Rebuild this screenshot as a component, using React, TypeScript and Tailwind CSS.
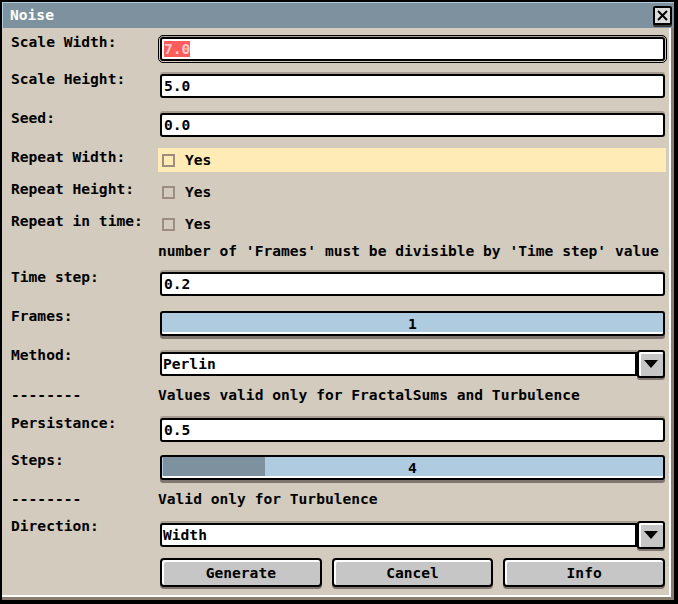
import React from "react";

const font = "font-['DejaVu_Sans_Mono',monospace] text-[14.6px] font-bold";

function Label({ children, check }: { children: React.ReactNode; check?: boolean }) {
  return (
    <div className={"w-[149px] shrink-0 leading-[16px] text-black " + (check ? "mt-[1px]" : "mt-[-3px]")}>
      {children}
    </div>
  );
}

function Entry({ children, focused }: { children?: React.ReactNode; focused?: boolean }) {
  return (
    <div
      className={
        "h-[24px] flex-1 rounded-[3px] border-2 border-black bg-white shadow-[0_-2px_0_#a99e92] flex items-center pl-[2px] leading-[16px] " +
        (focused ? "outline-1 outline-black outline-offset-[1px]" : "")
      }
    >
      {children}
    </div>
  );
}

function Slider({ value, fill }: { value: string; fill?: number }) {
  return (
    <div className="relative h-[25px] flex-1 rounded-[3px] border-2 border-black bg-[#aecbdf] shadow-[inset_0_-2px_0_#ffffff,0_3px_0_#7f7670] flex items-center justify-center leading-[16px] overflow-visible">
      {fill ? (
        <div className="absolute left-[1px] top-0 bottom-[2px] bg-[#7d929e]" style={{ width: fill }} />
      ) : null}
      <span className="relative">{value}</span>
    </div>
  );
}

function Combo({ value }: { value: string }) {
  return (
    <div className="flex-1 flex items-start">
      <div className="mt-[2px] h-[24px] flex-1 rounded-l-[3px] border-2 border-black bg-white shadow-[0_-2px_0_#a99e92] flex items-center pl-[1px] leading-[16px]">
        {value}
      </div>
      <div className="h-[28px] w-[28px] rounded-[3px] border-2 border-black bg-[#c6c6c6] shadow-[inset_2px_2px_0_#ffffff,0_2px_0_#7f7670] flex items-center justify-center">
        <svg width="14" height="8" viewBox="0 0 14 8">
          <polygon points="0,0 14,0 7,8" fill="#000" />
        </svg>
      </div>
    </div>
  );
}

function Check({ highlight }: { highlight?: boolean }) {
  return (
    <div
      className={
        "ml-[-2px] mr-[-1px] h-[24px] flex-1 flex items-center pl-[4px] leading-[16px] " +
        (highlight ? "bg-[#ffebb5]" : "")
      }
    >
      <div className="h-[13px] w-[13px] border-2 border-[#9c8d80]" />
      <span className="ml-[10px]">Yes</span>
    </div>
  );
}

function Btn({ children }: { children: React.ReactNode }) {
  return (
    <div className="h-[29px] rounded-[4px] border-2 border-black bg-[#c6c6c6] shadow-[inset_2px_2px_0_#ffffff,0_2px_0_#7f7670] flex items-center justify-center leading-[16px]">
      {children}
    </div>
  );
}

export default function App() {
  return (
    <div className={"w-[678px] h-[604px] bg-black pt-[2px] pl-[2px] pr-[4px] pb-[4px] " + font}>
      <div className="h-full flex flex-col bg-[#d3cbbd] shadow-[inset_-3px_-3px_0_#8b7d6f,inset_-5px_-5px_0_#ffffff]">
        <div className="h-[26px] shrink-0 bg-[#7d929e] shadow-[inset_0_1px_0_#aecbdf,inset_1px_0_0_#aecbdf] flex items-center justify-between pl-[8px] pr-[2px]">
          <span className="text-white leading-[16px]">Noise</span>
          <div className="h-[19px] w-[19px] rounded-[2px] border-2 border-black bg-[#dcdcdc] shadow-[0_2px_0_#3a3a3a] flex items-center justify-center">
            <svg width="11" height="11" viewBox="0 0 11 11">
              <path d="M1 1 L10 10 M10 1 L1 10" stroke="#000" strokeWidth="2" />
            </svg>
          </div>
        </div>
        <div className="flex-1 flex flex-col pl-[9px] pr-[9px] pt-[9px] text-black">
          <div className="h-[37px] flex items-start">
            <Label>Scale Width:</Label>
            <Entry focused>
              <span className="bg-[#fe5c5c] text-[#ffc9c9]">7.0</span>
            </Entry>
          </div>
          <div className="h-[39px] flex items-start">
            <Label>Scale Height:</Label>
            <Entry>5.0</Entry>
          </div>
          <div className="h-[35px] flex items-start">
            <Label>Seed:</Label>
            <Entry>0.0</Entry>
          </div>
          <div className="h-[32px] flex items-start">
            <Label check>Repeat Width:</Label>
            <Check highlight />
          </div>
          <div className="h-[32px] flex items-start">
            <Label check>Repeat Height:</Label>
            <Check />
          </div>
          <div className="h-[28px] flex items-start">
            <Label check>Repeat in time:</Label>
            <Check />
          </div>
          <div className="h-[32px] flex items-start">
            <div className="w-[147px] shrink-0" />
            <div className="leading-[22px] whitespace-nowrap">number of 'Frames' must be divisible by 'Time step' value</div>
          </div>
          <div className="h-[39px] flex items-start">
            <Label>Time step:</Label>
            <Entry>0.2</Entry>
          </div>
          <div className="h-[39px] flex items-start">
            <Label>Frames:</Label>
            <Slider value="1" />
          </div>
          <div className="h-[34px] flex items-start">
            <Label>Method:</Label>
            <Combo value="Perlin" />
          </div>
          <div className="h-[34px] flex items-start leading-[22px]">
            <div className="w-[147px] shrink-0">--------</div>
            <div className="whitespace-nowrap">Values valid only for FractalSums and Turbulence</div>
          </div>
          <div className="h-[37px] flex items-start">
            <Label>Persistance:</Label>
            <Entry>0.5</Entry>
          </div>
          <div className="h-[33px] flex items-start">
            <Label>Steps:</Label>
            <Slider value="4" fill={102} />
          </div>
          <div className="h-[33px] flex items-start leading-[22px]">
            <div className="w-[147px] shrink-0">--------</div>
            <div className="whitespace-nowrap">Valid only for Turbulence</div>
          </div>
          <div className="h-[37px] flex items-start">
            <Label>Direction:</Label>
            <Combo value="Width" />
          </div>
          <div className="flex items-start">
            <div className="w-[149px] shrink-0" />
            <div className="flex-1 grid grid-cols-3 gap-[10px]">
              <Btn>Generate</Btn>
              <Btn>Cancel</Btn>
              <Btn>Info</Btn>
            </div>
          </div>
        </div>
      </div>
    </div>
  );
}
